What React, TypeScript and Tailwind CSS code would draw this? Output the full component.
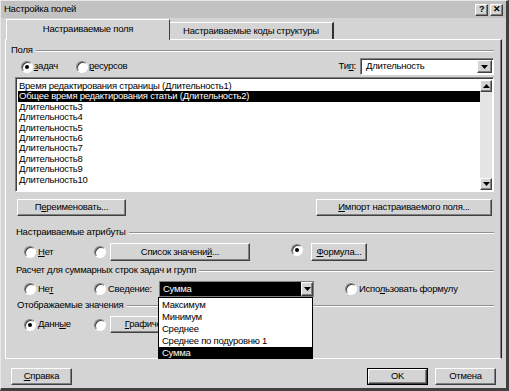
import type { ReactNode } from 'react';

const FIELDS = [
  'Время редактирования страницы (Длительность1)',
  'Общее время редактирования статьи (Длительность2)',
  'Длительность3',
  'Длительность4',
  'Длительность5',
  'Длительность6',
  'Длительность7',
  'Длительность8',
  'Длительность9',
  'Длительность10',
];

const SUMMARY_OPTIONS = ['Максимум', 'Минимум', 'Среднее', 'Среднее по подуровню 1', 'Сумма'];

function Radio({ checked }: { checked?: boolean }) {
  return (
    <span className="relative inline-block w-[12px] h-[12px] shrink-0 rounded-full bg-white border border-t-[#808080] border-l-[#808080] border-r-white border-b-white shadow-[inset_1px_1px_0_#404040]">
      {checked && <span className="absolute left-[3px] top-[3px] w-[4px] h-[4px] rounded-full bg-black" />}
    </span>
  );
}

function Btn({ children, className = '' }: { children: ReactNode; className?: string }) {
  return (
    <div
      className={`flex items-center justify-center bg-[#d4d4d4] border border-t-white border-l-white border-r-[#404040] border-b-[#404040] shadow-[inset_-1px_-1px_0_#808080] ${className}`}
    >
      {children}
    </div>
  );
}

function Arrow({ up }: { up?: boolean }) {
  return (
    <svg width="7" height="4" viewBox="0 0 7 4">
      <path d={up ? 'M3.5 0 L7 4 L0 4 Z' : 'M0 0 L7 0 L3.5 4 Z'} fill="#000" />
    </svg>
  );
}

function GroupHeader({ label, className = '' }: { label: string; className?: string }) {
  return (
    <div className={`flex items-center h-[11px] ${className}`}>
      <span className="pr-[3px] whitespace-nowrap">{label}</span>
      <div className="flex-1 flex flex-col">
        <div className="h-px bg-[#909090]" />
        <div className="h-px bg-white" />
      </div>
    </div>
  );
}

export default function App() {
  return (
    <div className="relative w-[509px] h-[391px] overflow-hidden bg-[#d4d4d4] text-[9.5px] tracking-[-0.25px] text-black font-['Liberation_Sans',Arial,sans-serif] border-l border-t border-l-[#e8e8e8] border-t-[#e8e8e8] border-r-[3px] border-b-[3px] border-r-[#404040] border-b-[#404040] flex flex-col">
      {/* title bar */}
      <div className="h-[17px] bg-[#c2c2c2] flex items-center pl-[3px] pr-[3px] shrink-0">
        <span>Настройка полей</span>
        <div className="ml-auto flex gap-[2px]">
          <Btn className="w-[13px] h-[12px] font-bold text-[9px]">?</Btn>
          <Btn className="w-[13px] h-[12px] font-bold text-[9px]">✕</Btn>
        </div>
      </div>

      {/* tabs */}
      <div className="flex items-end h-[21px] pl-[5px] shrink-0">
        <div className="relative z-10 w-[164px] h-[21px] -mb-px bg-[#d4d4d4] border-t border-l border-r border-t-white border-l-white border-r-[#404040] flex items-center justify-center pb-[2px]">
          Настраиваемые поля
        </div>
        <div className="w-[164px] h-[17px] border-t border-r-2 border-t-white border-r-[#303030] flex items-center justify-center">
          Настраиваемые коды структуры
        </div>
      </div>

      {/* panel */}
      <div className="ml-[4px] w-[497px] h-[320px] border border-t-white border-l-white border-r-[#202020] border-b-white shadow-[inset_-1px_0_0_#808080] flex flex-col pl-[5px] pr-[7px]">
        <GroupHeader label="Поля" className="mt-[5px]" />
        <div className="mt-[2px] h-[17px] flex items-center">
          <div className="ml-[10px] flex items-center gap-[1px]">
            <Radio checked />
            <span>
              <span className="underline">з</span>адач
            </span>
          </div>
          <div className="ml-[18px] flex items-center gap-[1px]">
            <Radio />
            <span>
              <span className="underline">р</span>есурсов
            </span>
          </div>
          <span className="ml-auto mr-[4px]">
            Ти<span className="underline">п</span>:
          </span>
          <div className="w-[134px] h-[17px] bg-white border border-t-[#808080] border-l-[#808080] border-r-white border-b-white shadow-[inset_1px_1px_0_#404040] flex items-center">
            <span className="pl-[5px]">Длительность</span>
            <Btn className="ml-auto mr-px w-[15px] h-[13px]">
              <Arrow />
            </Btn>
          </div>
        </div>

        {/* field list */}
        <div className="mt-[2px] ml-[4px] h-[115px] bg-white border border-t-[#808080] border-l-[#808080] border-r-white border-b-white shadow-[inset_1px_1px_0_#404040] flex pl-[2px] pt-[2px] pb-px">
          <div className="flex-1 flex flex-col pt-[1px]">
            {FIELDS.map((f, i) => (
              <div
                key={f}
                className={`h-[10.4px] leading-[10.4px] pl-[1px] whitespace-nowrap ${i === 1 ? 'bg-black text-white' : ''}`}
              >
                {f}
              </div>
            ))}
          </div>
          <div className="w-[12px] mr-px flex flex-col bg-[#e4e4e4]">
            <Btn className="h-[12px]">
              <Arrow up />
            </Btn>
            <div className="flex-1" />
            <Btn className="h-[12px]">
              <Arrow />
            </Btn>
          </div>
        </div>

        <div className="mt-[7px] h-[17px] flex">
          <Btn className="ml-[6px] w-[109px]">
            <span>
              П<span className="underline">е</span>реименовать...
            </span>
          </Btn>
          <Btn className="ml-auto mr-[2px] w-[176px]">
            <span>
              <span className="underline">И</span>мпорт настраиваемого поля...
            </span>
          </Btn>
        </div>

        <GroupHeader label="Настраиваемые атрибуты" className="mt-[11px] ml-[5px]" />
        <div className="mt-[5px] h-[18px] flex items-center">
          <div className="ml-[13px] w-[70px] flex items-center gap-[2px]">
            <Radio />
            <span>
              <span className="underline">Н</span>ет
            </span>
          </div>
          <Radio />
          <Btn className="ml-[4px] w-[140px] h-[18px]">
            <span>
              Список значени<span className="underline">й</span>...
            </span>
          </Btn>
          <div className="ml-[41px]">
            <Radio checked />
          </div>
          <Btn className="ml-[8px] w-[56px] h-[18px]">
            <span>
              <span className="underline">Ф</span>ормула...
            </span>
          </Btn>
        </div>

        <GroupHeader label="Расчет для суммарных строк задач и групп" className="mt-[4px] ml-[5px]" />
        <div className="mt-[5px] h-[16px] flex items-center">
          <div className="ml-[13px] w-[70px] flex items-center gap-[2px]">
            <Radio />
            <span>
              Не<span className="underline">т</span>
            </span>
          </div>
          <Radio />
          <span className="ml-[2px] w-[51px]">Сведение:</span>
          <div className="w-[155px] h-[16px] bg-black border border-[#808080] flex items-center">
            <span className="pl-[3px] text-white">Сумма</span>
            <Btn className="ml-auto w-[12px] h-[14px] border-l-white">
              <Arrow />
            </Btn>
          </div>
          <div className="ml-[31px] flex items-center gap-[2px]">
            <Radio />
            <span>
              Испо<span className="underline">л</span>ьзовать формулу
            </span>
          </div>
        </div>

        <GroupHeader label="Отображаемые значения" className="mt-[3px] ml-[6px]" />
        <div className="mt-[5px] h-[17px] flex items-center">
          <div className="ml-[13px] w-[70px] flex items-center gap-[2px]">
            <Radio checked />
            <span>
              Данн<span className="underline">ы</span>е
            </span>
          </div>
          <Radio />
          <Btn className="ml-[4px] w-[92px] h-[17px]">
            <span>
              <span className="underline">Г</span>рафические...
            </span>
          </Btn>
        </div>
      </div>

      {/* bottom buttons */}
      <div className="mt-[9px] h-[17px] flex">
        <Btn className="ml-[10px] w-[61px]">
          <span>
            <span className="underline">С</span>правка
          </span>
        </Btn>
        <div className="ml-auto mr-[10px] flex gap-[7px]">
          <div className="w-[61px] border border-black">
            <Btn className="h-full">OK</Btn>
          </div>
          <Btn className="w-[61px]">Отмена</Btn>
        </div>
      </div>

      {/* open summary dropdown */}
      <div className="absolute left-[157px] top-[296px] w-[155px] h-[62px] bg-white border border-black flex flex-col pt-[1px]">
        {SUMMARY_OPTIONS.map((o, i) => (
          <div
            key={o}
            className={`h-[12px] leading-[12px] pl-[3px] ${i === 4 ? 'bg-black text-white' : ''}`}
          >
            {o}
          </div>
        ))}
      </div>
    </div>
  );
}
